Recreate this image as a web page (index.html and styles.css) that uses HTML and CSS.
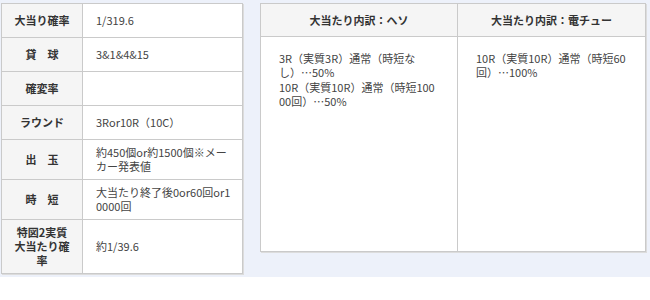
FILE: index.html
```html
<!DOCTYPE html>
<html lang="ja">
<head>
<meta charset="utf-8">
<title>スペック</title>
<link rel="stylesheet" href="styles.css">
</head>
<body>
<div class="page">
  <table class="spec">
    <colgroup><col class="spec-label"><col></colgroup>
    <tr class="row-single"><th>大当り確率</th><td>1/319.6</td></tr>
    <tr class="row-single"><th>貸　球</th><td>3&amp;1&amp;4&amp;15</td></tr>
    <tr class="row-single"><th>確変率</th><td></td></tr>
    <tr class="row-single"><th>ラウンド</th><td>3Ror10R（10C）</td></tr>
    <tr><th>出　玉</th><td>約450個or約1500個※メーカー発表値</td></tr>
    <tr><th>時　短</th><td>大当たり終了後0or60回or10000回</td></tr>
    <tr><th>特図2実質大当たり確率</th><td>約1/39.6</td></tr>
  </table>

  <table class="breakdown">
    <colgroup><col class="col-heso"><col></colgroup>
    <tr>
      <th>大当たり内訳：ヘソ</th>
      <th>大当たり内訳：電チュー</th>
    </tr>
    <tr>
      <td class="cell-heso">3R（実質3R）通常（時短なし）…50%<br>10R（実質10R）通常（時短10000回）…50%</td>
      <td class="cell-den">10R（実質10R）通常（時短60回）…100%</td>
    </tr>
  </table>
</div>
</body>
</html>
```

FILE: styles.css
```css
html, body {
  margin: 0;
  padding: 0;
  background: #fff;
}

body {
  font-family: "Noto Sans CJK JP", "Noto Sans", sans-serif;
  font-size: 11px;
  line-height: 14.4px;
  color: #444;
}

.page {
  display: flex;
  align-items: flex-start;
  gap: 17px;
  height: 277px;
  box-sizing: border-box;
  padding: 3px 0 0 1px;
  background: #edf1fa;
}

table {
  border-collapse: collapse;
  table-layout: fixed;
  background: #fff;
  box-shadow: 1px 1px 0 #dcdcdc;
}

th, td {
  border: 1px solid #cacaca;
  word-break: break-all;
}

th {
  font-weight: bold;
  color: #333;
  background: #f5f5f5;
}

/* left spec table */
.spec {
  width: 242px;
}

.spec-label {
  width: 81px;
}

.spec th {
  padding: 5px 11px;
  text-align: center;
}

.spec td {
  padding: 5px 9px 5px 13px;
  text-align: left;
}

.spec .row-single th,
.spec .row-single td {
  height: 23px;
}

/* right breakdown table */
.breakdown {
  width: 386px;
}

.col-heso {
  width: 197px;
}

.breakdown th {
  height: 32px;
  padding: 0;
  text-align: center;
}

.breakdown td {
  height: 200px;
  padding: 14px 22px 0 18px;
  vertical-align: top;
}

.breakdown .cell-den {
  padding-right: 17px;
}
```
